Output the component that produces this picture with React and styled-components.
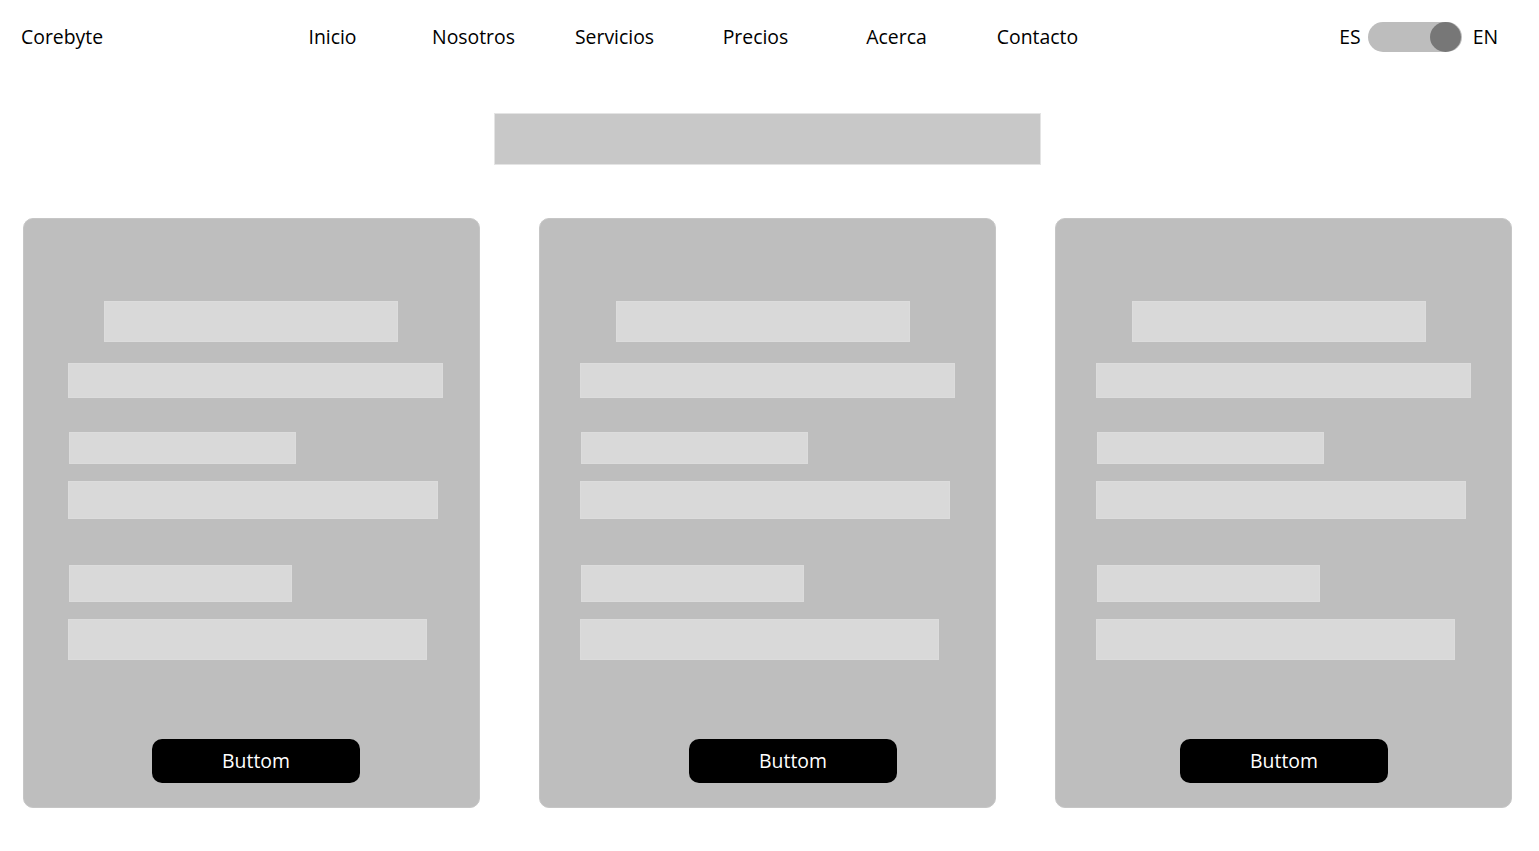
import React, { useState } from 'react';
import styled, { createGlobalStyle } from 'styled-components';

const GlobalStyle = createGlobalStyle`
	body {
		margin: 0;
		background: #ffffff;
		font-family: 'Open Sans', 'Noto Sans', sans-serif;
		color: #000;
	}
`;

const links = ['Inicio', 'Nosotros', 'Servicios', 'Precios', 'Acerca', 'Contacto'];

// each card has small offsets in the wireframe, kept as data
const cards = [
	{ inset: 45, button: 129 },
	{ inset: 41, button: 150 },
	{ inset: 41, button: 125 },
];

export default function App() {
	const [english, setEnglish] = useState(true);

	return (
		<Page>
			<GlobalStyle />
			<Header>
				<Logo>Corebyte</Logo>
				<Nav>
					{links.map((l) => (
						<NavItem key={l}>{l}</NavItem>
					))}
				</Nav>
				<Lang>
					<span>ES</span>
					<Switch $on={english} onClick={() => setEnglish(!english)}>
						<Knob $on={english} />
					</Switch>
					<span>EN</span>
				</Lang>
			</Header>
			<Title />
			<Cards>
				{cards.map((c, i) => (
					<Card key={i} $inset={c.inset}>
						<Bar $w={294} $h={41} $dx={36} />
						<Bar $w={375} $h={35} $mt={21} />
						<Bar $w={227} $h={32} $mt={34} $dx={1} />
						<Bar $w={370} $h={38} $mt={17} />
						<Bar $w={223} $h={37} $mt={46} $dx={1} />
						<Bar $w={359} $h={41} $mt={17} />
						<Button $dx={c.button - c.inset}>Buttom</Button>
					</Card>
				))}
			</Cards>
		</Page>
	);
}

const Page = styled.div`
	width: 1539px;
	display: flex;
	flex-direction: column;
`;
const Header = styled.header`
	height: 74px;
	box-sizing: border-box;
	display: flex;
	align-items: center;
	padding: 0 41px 2px 21px;
	font-size: 19.4px;
`;
const Logo = styled.div`
	width: 241px;
`;
const Nav = styled.nav`
	display: flex;
`;
const NavItem = styled.a`
	width: 141px;
	text-align: center;
	cursor: pointer;
`;
const Lang = styled.div`
	margin-left: auto;
	display: flex;
	align-items: center;
	gap: 7px;
	span:last-child {
		margin-left: 4px;
	}
`;
const Switch = styled.div`
	width: 94px;
	height: 30px;
	margin-top: 2px;
	border-radius: 15px;
	background: #bdbdbd;
	position: relative;
	cursor: pointer;
`;
const Knob = styled.div`
	position: absolute;
	top: 0;
	left: ${(p) => (p.$on ? '62px' : '0')};
	width: 31px;
	height: 30px;
	border-radius: 50%;
	background: #777777;
`;
const Title = styled.div`
	width: 545px;
	height: 50px;
	margin: 39px 0 0 494px;
	background: #c8c8c8;
	border: 1px solid #e4e4e4;
`;
const Cards = styled.div`
	display: grid;
	grid-template-columns: repeat(3, 457px);
	gap: 59px;
	padding: 53px 0 0 23px;
`;
const Card = styled.div`
	height: 590px;
	box-sizing: border-box;
	background: #bebebe;
	border-radius: 10px;
	border: 1px solid #c6c6c6;
	padding: 82px 0 0 ${(p) => p.$inset - 1}px;
	display: flex;
	flex-direction: column;
	align-items: flex-start;
`;
const Bar = styled.div`
	width: ${(p) => p.$w}px;
	height: ${(p) => p.$h}px;
	margin-top: ${(p) => p.$mt || 0}px;
	margin-left: ${(p) => p.$dx || 0}px;
	box-sizing: border-box;
	background: #d9d9d9;
	border: 1px solid #dcdcdc;
`;
const Button = styled.button`
	margin: 79px 0 0 ${(p) => p.$dx}px;
	width: 208px;
	height: 44px;
	padding: 0 0 2px;
	border: none;
	border-radius: 10px;
	background: #000;
	color: #fff;
	font-family: 'Open Sans', 'Noto Sans', sans-serif;
	font-size: 19.4px;
	cursor: pointer;
`;
